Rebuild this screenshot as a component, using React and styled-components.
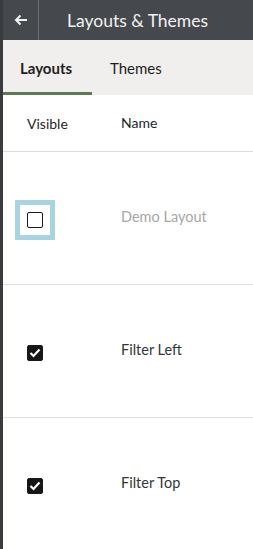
import React from 'react';
import styled, { createGlobalStyle } from 'styled-components';

const GlobalStyle = createGlobalStyle`
  html, body {
    margin: 0;
    padding: 0;
    background: #ffffff;
  }
  body {
    font-family: Lato, "Noto Sans", "Liberation Sans", sans-serif;
  }
`;

const Panel = styled.div`
  width: 253px;
  height: 549px;
  box-sizing: border-box;
  border-left: 3px solid #3a3b3e;
  background: #ffffff;
  overflow: hidden;
`;

const TitleBar = styled.div`
  display: flex;
  align-items: center;
  height: 40px;
  background: #45484d;
  color: #f2f2f2;
`;

const BackButton = styled.button`
  width: 36px;
  height: 40px;
  display: flex;
  align-items: center;
  justify-content: center;
  background: none;
  border: none;
  border-right: 1px solid #6b6e73;
  padding: 0;
  cursor: pointer;
`;

const Title = styled.h1`
  margin: 0 0 0 28px;
  font-size: 17.5px;
  font-weight: 400;
  color: #f2f2f2;
`;

const Tabs = styled.div`
  display: flex;
  height: 55px;
  background: #f1efed;
`;

const Tab = styled.div`
  width: ${p => p.$width}px;
  box-sizing: border-box;
  display: flex;
  align-items: center;
  padding-left: ${p => p.$pad}px;
  font-size: 15px;
  font-weight: ${p => (p.$active ? 700 : 400)};
  color: #1e1e1e;
  border-bottom: 3px solid ${p => (p.$active ? '#5f7a52' : 'transparent')};
  padding-top: 3px;
`;

const Table = styled.div`
  display: flex;
  flex-direction: column;
`;

const HeadRow = styled.div`
  display: grid;
  grid-template-columns: 118px 1fr;
  height: 57px;
  align-items: center;
  border-bottom: 1px solid #dedede;
  box-sizing: border-box;
  font-size: 14px;
  color: #1f1f1f;
`;

const HeadCell = styled.div`
  padding-left: ${p => p.$pad}px;
  margin-top: ${p => p.$shift}px;
`;

const Row = styled.div`
  display: grid;
  grid-template-columns: 118px 1fr;
  height: 133px;
  align-items: center;
  border-bottom: 1px solid #dedede;
  box-sizing: border-box;
`;

const CheckCell = styled.div`
  padding-left: 24px;
  display: flex;
  align-items: center;
  margin-top: 3px;
`;

const Focus = styled.div`
  margin-left: -12px;
  padding: 7px 7px;
  border: 5px solid ${p => (p.$focused ? '#a9d3e0' : 'transparent')};
  display: flex;
`;

const Box = styled.span`
  width: 16px;
  height: 16px;
  box-sizing: border-box;
  border-radius: 2px;
  border: 1.5px solid #1a1a1a;
  background: ${p => (p.$checked ? '#161616' : '#ffffff')};
  display: flex;
  align-items: center;
  justify-content: center;
`;

const NameCell = styled.div`
  font-size: 14.5px;
  margin-top: -4px;
  color: ${p => (p.$disabled ? '#a6a6a6' : '#363636')};
`;

const rows = [
  { name: 'Demo Layout', checked: false, focused: true, disabled: true },
  { name: 'Filter Left', checked: true },
  { name: 'Filter Top', checked: true },
];

export default function App() {
  return (
    <>
      <GlobalStyle />
      <Panel>
        <TitleBar>
          <BackButton aria-label="Back">
            <svg width="14" height="12" viewBox="0 0 14 12">
              <path d="M13 6H2M6.5 1.5L2 6l4.5 4.5" stroke="#f2f2f2" strokeWidth="2" fill="none" />
            </svg>
          </BackButton>
          <Title>Layouts &amp; Themes</Title>
        </TitleBar>
        <Tabs>
          <Tab $active $width={89} $pad={17}>Layouts</Tab>
          <Tab $width={100} $pad={18}>Themes</Tab>
        </Tabs>
        <Table>
          <HeadRow>
            <HeadCell $pad={24} $shift={1}>Visible</HeadCell>
            <HeadCell $pad={0} $shift={-2}>Name</HeadCell>
          </HeadRow>
          {rows.map(r => (
            <Row key={r.name}>
              <CheckCell>
                {r.focused ? (
                  <Focus $focused>
                    <Box $checked={r.checked} />
                  </Focus>
                ) : (
                  <Box $checked={r.checked}>
                    <svg width="12" height="10" viewBox="0 0 12 10">
                      <path d="M1.5 5l3 3 6-6.5" stroke="#ffffff" strokeWidth="2.2" fill="none" />
                    </svg>
                  </Box>
                )}
              </CheckCell>
              <NameCell $disabled={r.disabled}>{r.name}</NameCell>
            </Row>
          ))}
        </Table>
      </Panel>
    </>
  );
}
